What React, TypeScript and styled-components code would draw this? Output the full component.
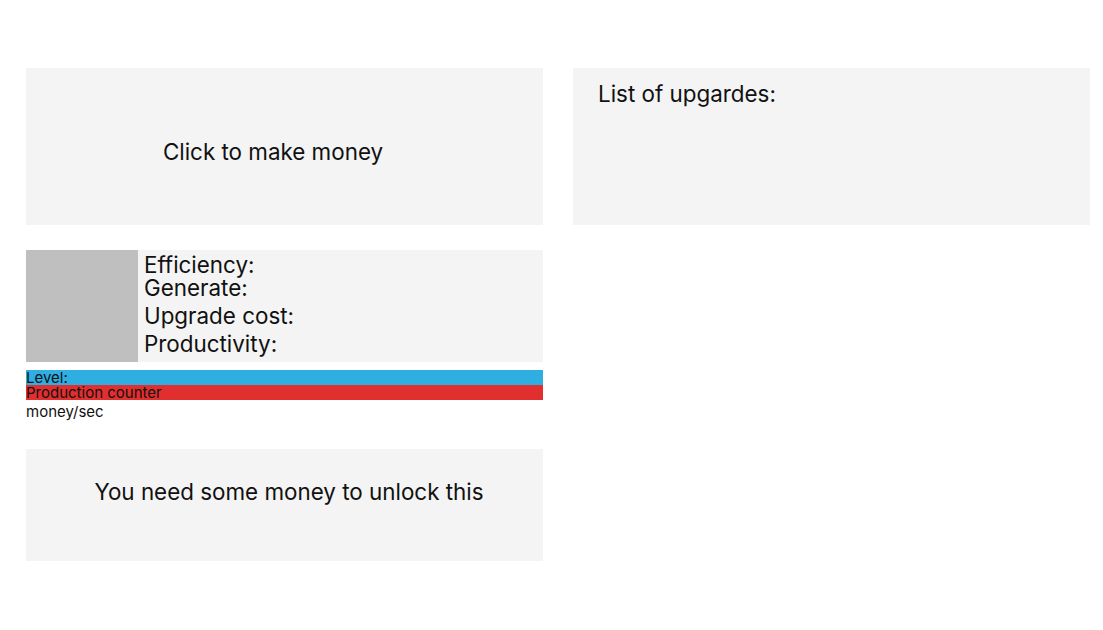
import React from "react";
import styled, { createGlobalStyle } from "styled-components";

const Global = createGlobalStyle`
  html, body { margin: 0; padding: 0; background: #fff; }
  body { font-family: Inter, "Noto Sans", sans-serif; color: #111; }
`;

const Page = styled.div`
  display: grid;
  grid-template-columns: 517px 517px;
  column-gap: 30px;
  padding: 68px 0 0 26px;
  align-items: start;
`;

const Column = styled.div`
  display: flex;
  flex-direction: column;
`;

const Panel = styled.div<{ $h: number }>`
  background: #f4f4f4;
  height: ${(p) => p.$h}px;
  box-sizing: border-box;
`;

const CenterPanel = styled(Panel)<{ $pt: number; $pl: number; $pr: number }>`
  display: flex;
  justify-content: center;
  align-items: flex-start;
  padding: ${(p) => p.$pt}px ${(p) => p.$pr}px 0 ${(p) => p.$pl}px;
  font-size: 22.4px;
  line-height: 24px;
`;

const ListPanel = styled(Panel)`
  padding: 14px 25px;
  font-size: 22.4px;
  line-height: 24px;
`;

const Card = styled.div`
  display: flex;
  margin-top: 25px;
  background: #f4f4f4;
  height: 112px;
`;

const Thumb = styled.div`
  width: 112px;
  height: 112px;
  background: #bfbfbf;
  flex: none;
`;

const Stats = styled.div`
  display: flex;
  flex-direction: column;
  padding: 3px 0 0 6px;
  font-size: 22.4px;
`;

const Stat = styled.div<{ $lh: number; $mt?: number }>`
  line-height: ${(p) => p.$lh}px;
  margin-top: ${(p) => p.$mt ?? 0}px;
`;

const Bars = styled.div`
  display: flex;
  flex-direction: column;
  margin-top: 8px;
`;

const Bar = styled.div<{ $bg: string }>`
  background: ${(p) => p.$bg};
  height: 15px;
  font-size: 15px;
  line-height: 15px;
  color: #111;
  white-space: nowrap;
`;

const Caption = styled.div`
  font-size: 15px;
  line-height: 18px;
  margin-top: 3px;
  margin-bottom: 28px;
`;

export default function App() {
  return (
    <>
      <Global />
      <Page>
        <Column>
          <CenterPanel $h={157} $pt={72} $pl={0} $pr={23}>Click to make money</CenterPanel>
          <Card>
            <Thumb />
            <Stats>
              <Stat $lh={23}>Efficiency:</Stat>
              <Stat $lh={23}>Generate:</Stat>
              <Stat $lh={28} $mt={3}>Upgrade cost:</Stat>
              <Stat $lh={28}>Productivity:</Stat>
            </Stats>
          </Card>
          <Bars>
            <Bar $bg="#2eaee1">Level:</Bar>
            <Bar $bg="#e12f2f">Production counter</Bar>
          </Bars>
          <Caption>money/sec</Caption>
          <CenterPanel $h={112} $pt={31} $pl={9} $pr={0}>You need some money to unlock this</CenterPanel>
        </Column>
        <Column>
          <ListPanel $h={157}>List of upgardes:</ListPanel>
        </Column>
      </Page>
    </>
  );
}
